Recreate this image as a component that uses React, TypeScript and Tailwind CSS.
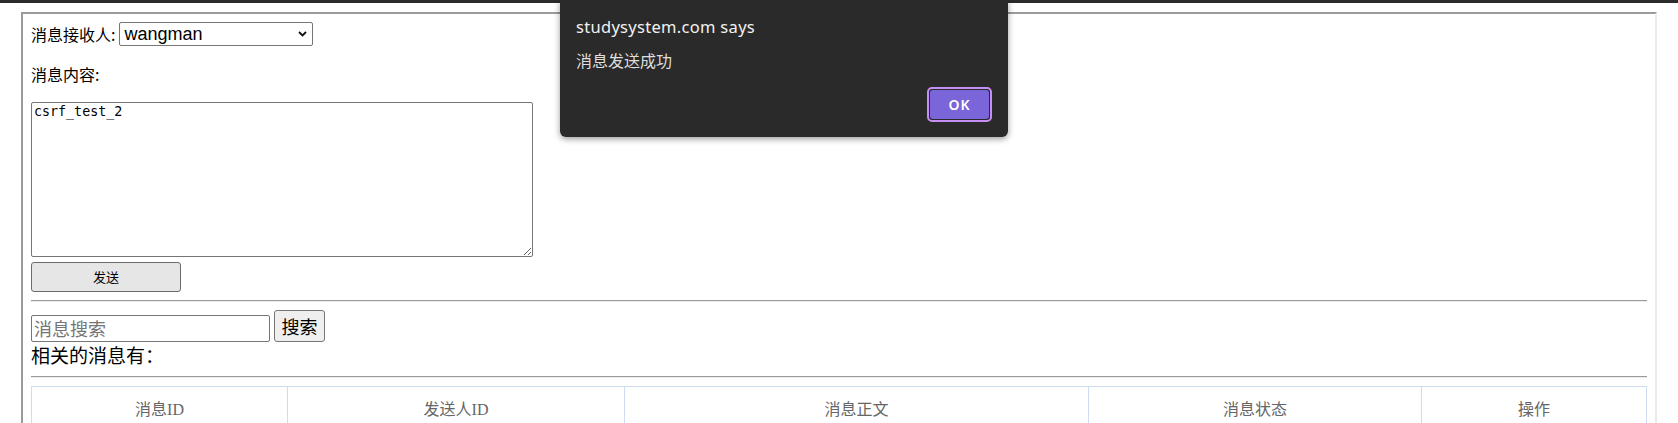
const columns = [
  { label: "消息ID", width: "w-[256px]" },
  { label: "发送人ID", width: "w-[337px]" },
  { label: "消息正文", width: "w-[464px]" },
  { label: "消息状态", width: "w-[333px]" },
  { label: "操作", width: "" },
];

const AlertDialog = () => {
  return (
    <div className="absolute left-[560px] top-0 flex h-[137px] w-[448px] flex-col rounded-b-[6px] bg-[#2a2a2a] px-[16px] pb-[15px] pt-[16px] font-['Noto_Sans','Noto_Sans_CJK_SC',sans-serif] shadow-[0_2px_6px_rgba(0,0,0,0.4)]">
      <h2 className="text-[16.5px] leading-[22px] tracking-[0.3px] text-[#f1f1f1]">studysystem.com says</h2>
      <p className="mt-[12px] text-[16px] leading-[22px] text-[#dedede]">消息发送成功</p>
      <div className="mt-auto flex justify-end">
        <button className="h-[35px] w-[65px] rounded-[5px] border-2 border-[#c68ff5] bg-[#2a2a2a] p-[1px]">
          <span className="flex h-full w-full items-center justify-center rounded-[3px] bg-[#7a66d8] text-[14px] font-semibold tracking-[0.06em] text-white">
            OK
          </span>
        </button>
      </div>
    </div>
  );
};

export default function App() {
  return (
    <div className="relative h-[423px] w-[1678px] overflow-hidden bg-white font-['Liberation_Serif','Noto_Sans_CJK_SC',serif] text-black">
      <div className="h-[3px] bg-[#2b2b2b]" />
      <div className="ml-[21px] mt-[9px] h-[440px] w-[1636px] border-2 border-b-[#ebebeb] border-l-[#9a9a9a] border-r-[#ebebeb] border-t-[#9a9a9a] p-[8px]">
        <div className="flex h-[24px] items-center">
          <span className="text-[16px] font-['Noto_Sans_CJK_SC',sans-serif]">消息接收人:</span>
          <div className="relative ml-[4px]">
            <select
              defaultValue="wangman"
              className="h-[24px] w-[194px] appearance-none rounded-[2px] border border-[#767676] bg-white pl-[4px] font-['Liberation_Sans',sans-serif] text-[18px] leading-[20px] text-black"
            >
              <option value="wangman">wangman</option>
            </select>
            <svg
              className="pointer-events-none absolute right-[6px] top-[9px]"
              width="9"
              height="6"
              viewBox="0 0 9 6"
            >
              <path d="M1 1l3.5 3.5L8 1" fill="none" stroke="#111" strokeWidth="1.8" />
            </svg>
          </div>
        </div>

        <p className="mt-[16px] text-[16px] leading-[24px] font-['Noto_Sans_CJK_SC',sans-serif]">消息内容:</p>

        <textarea
          defaultValue="csrf_test_2"
          className="mt-[16px] block h-[155px] w-[502px] resize rounded-[2px] border border-[#767676] px-[2px] py-[1px] font-['DejaVu_Sans_Mono',monospace] text-[13.33px] leading-[16px]"
        />

        <button className="mt-[5px] block h-[30px] w-[150px] rounded-[3px] border border-[#6b6b6b] bg-[#e6e6e6] font-['Noto_Sans_CJK_SC',sans-serif] text-[13px]">
          发送
        </button>

        <div className="mt-[8px] h-[2px] border-b border-t border-b-[#eeeeee] border-t-[#9a9a9a]" />

        <div className="mt-[8px] flex items-end gap-[4px]">
          <input
            placeholder="消息搜索"
            className="h-[27px] w-[239px] rounded-[2px] border border-[#767676] px-[2px] font-['Noto_Sans_CJK_SC',sans-serif] text-[18px] placeholder:text-[#757575]"
          />
          <button className="h-[32px] w-[51px] rounded-[3px] border border-[#767676] bg-[#efefef] font-['Noto_Sans_CJK_SC',sans-serif] text-[18px]">
            搜索
          </button>
        </div>
        <p className="text-[19px] leading-[26px] font-['Noto_Sans_CJK_SC',sans-serif]">相关的消息有：</p>

        <div className="mt-[8px] h-[2px] border-b border-t border-b-[#eeeeee] border-t-[#9a9a9a]" />

        <table className="mt-[8px] w-full border-collapse border border-[#cddcef]">
          <thead>
            <tr>
              {columns.map((col) => (
                <th
                  key={col.label}
                  className={`${col.width} border border-[#cddcef] pb-[12px] pt-[12px] text-center text-[16px] font-normal leading-[22px] text-[#666666]`}
                >
                  {col.label}
                </th>
              ))}
            </tr>
          </thead>
        </table>
      </div>
      <AlertDialog />
    </div>
  );
}
